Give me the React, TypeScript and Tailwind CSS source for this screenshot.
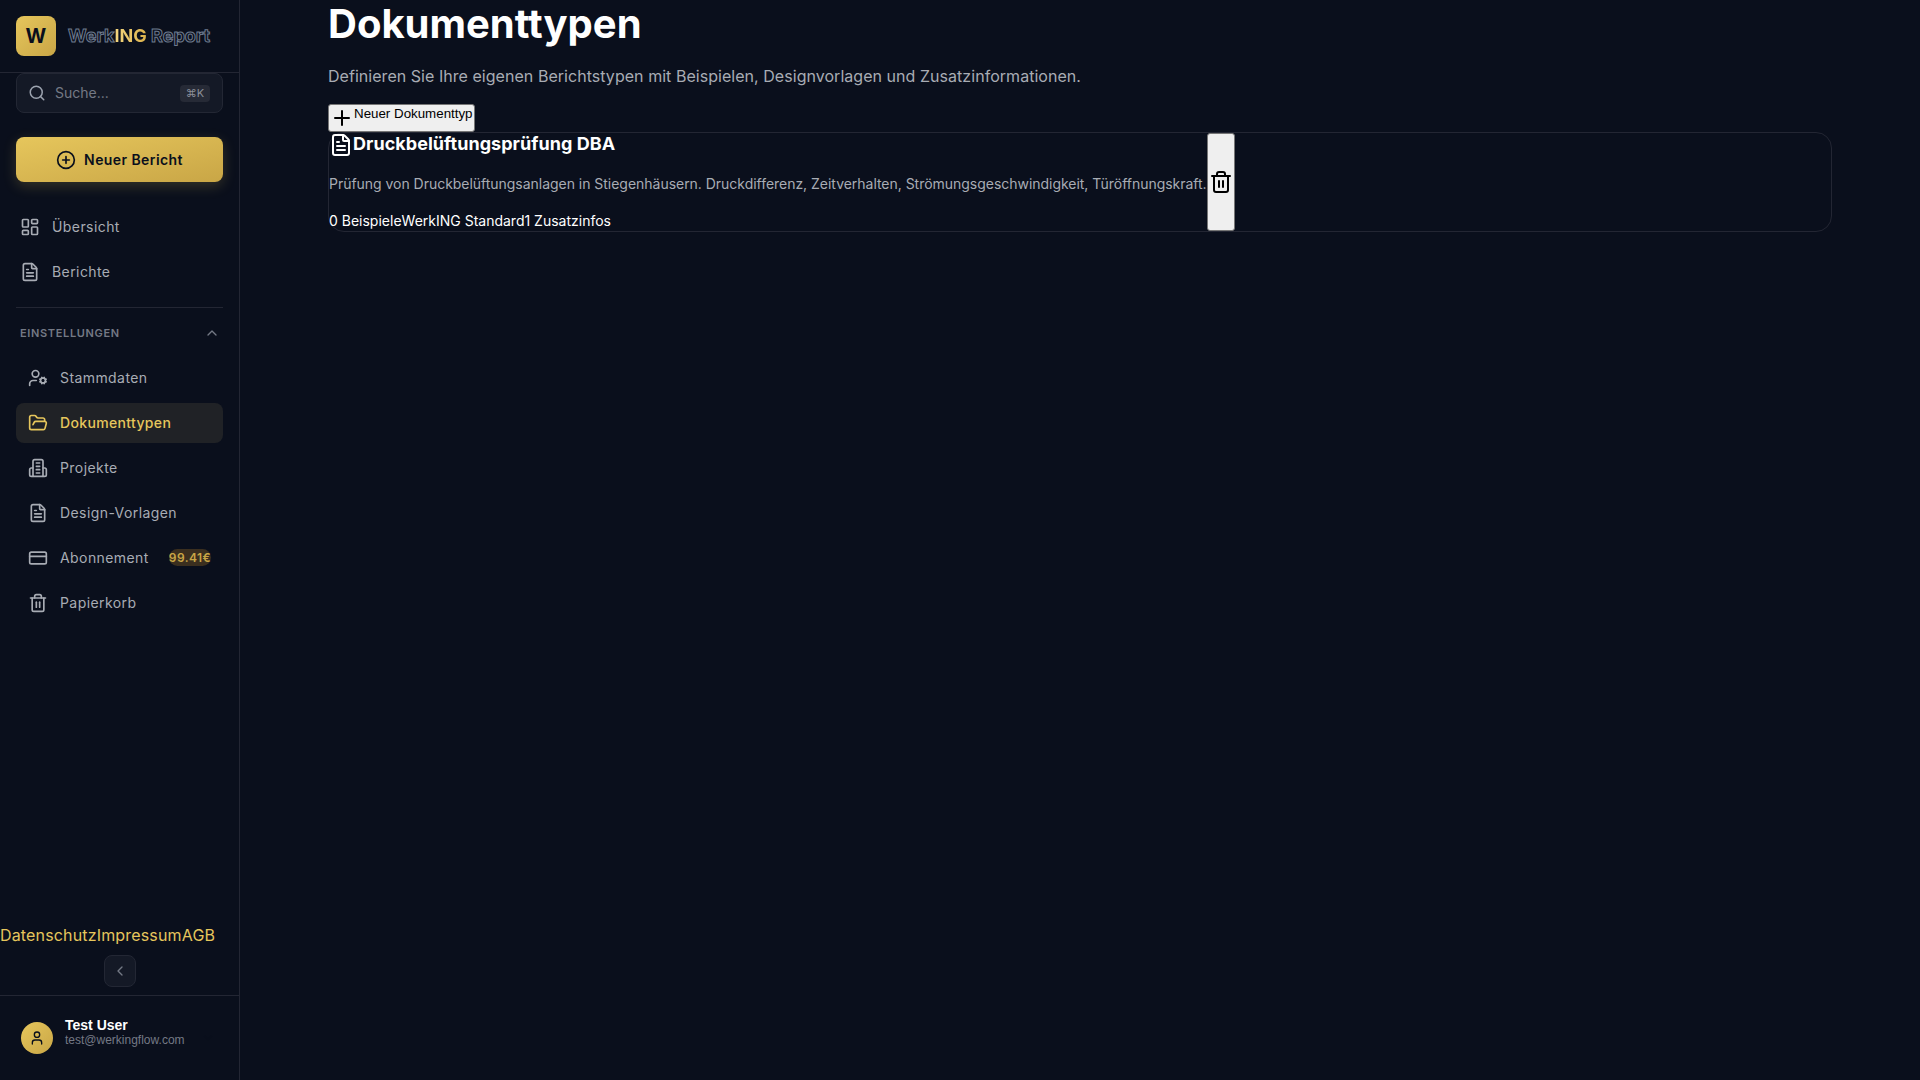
import React from 'react';
import {
  Search,
  CirclePlus,
  LayoutDashboard,
  FileText,
  ChevronUp,
  ChevronLeft,
  ChevronDown,
  UserCog,
  FolderOpen,
  CreditCard,
  Trash2,
  Plus,
  User,
} from 'lucide-react';

const gold = 'bg-gradient-to-br from-[#e6c65c] to-[#c9a646]';

// older lucide building, the wings sit lower than in the current package
const BuildingIcon: React.FC<{ size?: number; className?: string }> = ({ size = 20, className }) => (
  <svg width={size} height={size} viewBox="0 0 24 24" fill="none" stroke="currentColor" strokeWidth="2" strokeLinecap="round" strokeLinejoin="round" className={className}>
    <path d="M6 22V4a2 2 0 0 1 2-2h8a2 2 0 0 1 2 2v18Z" />
    <path d="M6 12H4a2 2 0 0 0-2 2v6a2 2 0 0 0 2 2h2" />
    <path d="M18 12h2a2 2 0 0 1 2 2v6a2 2 0 0 1-2 2h-2" />
    <path d="M10 6h4" />
    <path d="M10 10h4" />
    <path d="M10 14h4" />
    <path d="M10 18h4" />
  </svg>
);

const settingsItems = [
  { label: 'Stammdaten', icon: UserCog },
  { label: 'Dokumenttypen', icon: FolderOpen, active: true },
  { label: 'Projekte', icon: BuildingIcon },
  { label: 'Design-Vorlagen', icon: FileText },
  { label: 'Abonnement', icon: CreditCard, badge: '99.41€' },
  { label: 'Papierkorb', icon: Trash2 },
];

const App: React.FC = () => {
  return (
    <div className="flex h-screen overflow-hidden bg-[#0a0f1c] font-['Inter',sans-serif]">
      {/* Sidebar */}
      <aside className="flex w-[240px] shrink-0 flex-col border-r border-[#232633] bg-[#0a0f1c]">
        <div className="flex h-[73px] items-center gap-3 border-b border-[#232633] px-4">
          <div className={`flex h-10 w-10 items-center justify-center rounded-lg text-xl font-bold text-[#0a0f1c] ${gold}`}>W</div>
          <span className="text-lg font-bold text-transparent [-webkit-text-stroke:1px_#6d7a8e]">
            Werk<span className="bg-gradient-to-r from-[#f5d77f] to-[#d9b04a] bg-clip-text [-webkit-text-stroke-width:0]">ING</span> Report
          </span>
        </div>

        <div className="px-4">
          <div className="flex h-10 items-center rounded-lg border border-[#232734] bg-[#141926] pl-[11px] pr-3 text-sm text-[#747985]">
            <Search size={18} className="mr-[9px] text-[#9ca3af]" />
            <span>Suche...</span>
            <span className="ml-auto h-[17px] w-[30px] rounded bg-[#262a36] text-center text-[11px] leading-[17px] text-[#8b8f99]">⌘K</span>
          </div>

          <button className={`mt-6 flex h-[45px] w-full items-center justify-center gap-2 rounded-lg text-sm font-semibold tracking-[0.03em] text-[#0a0f1c] shadow-[0_4px_14px_rgba(230,198,92,0.2)] ${gold}`}>
            <CirclePlus size={20} />
            Neuer Bericht
          </button>
        </div>

        <nav className="mt-[25px] flex flex-col gap-[5px] px-4">
          <div className="flex h-10 items-center gap-3 rounded-lg px-1 text-sm tracking-[0.03em] text-[#a8acb4]">
            <LayoutDashboard size={20} />
            Übersicht
          </div>
          <div className="flex h-10 items-center gap-3 rounded-lg px-1 text-sm tracking-[0.03em] text-[#a8acb4]">
            <FileText size={20} />
            Berichte
          </div>
        </nav>

        <div className="mx-4 mt-[15px] border-t border-[#232633]" />

        <div className="flex items-center justify-between pl-5 pr-[19px] pt-[17px]">
          <span className="text-[11px] font-semibold tracking-[0.06em] text-[#747985]">EINSTELLUNGEN</span>
          <ChevronUp size={16} className="text-[#747985]" />
        </div>

        <nav className="mt-4 flex flex-col gap-[5px] px-4">
          {settingsItems.map(item => {
            const Icon = item.icon;
            return (
              <div
                key={item.label}
                className={`flex h-10 items-center gap-3 rounded-lg pl-3 pr-3 text-sm ${item.active ? 'bg-[#202226] font-medium tracking-[0.025em] text-[#e6c65c]' : 'tracking-[0.03em] text-[#a8acb4]'}`}
              >
                <Icon size={20} className="shrink-0" />
                <span>{item.label}</span>
                {item.badge && (
                  <span className="ml-auto rounded-full bg-[#3b2f1f] py-[1px] text-[12px] font-semibold leading-[15px] text-[#c9a646]">{item.badge}</span>
                )}
              </div>
            );
          })}
        </nav>

        <div className="mt-auto flex text-base tracking-[0.01em] text-[#e6c65c]">
          <a>Datenschutz</a>
          <a>Impressum</a>
          <a>AGB</a>
        </div>

        <div className="mt-[8px] flex justify-center pb-[8px]">
          <button className="flex h-8 w-8 items-center justify-center rounded-lg border border-[#232734] bg-[#141926] text-[#747985]">
            <ChevronLeft size={16} />
          </button>
        </div>

        <div className="flex h-[85px] items-center border-t border-[#232633] pl-[21px] pr-[24px]">
          <div className={`flex h-8 w-8 items-center justify-center rounded-full text-[#0a0f1c] ${gold}`}>
            <User size={16} />
          </div>
          <div className="ml-3 pb-3 font-['Liberation_Sans',sans-serif]">
            <div className="text-sm font-bold leading-[15px] text-white">Test User</div>
            <div className="text-xs leading-[14px] text-[#747985]">test@werkingflow.com</div>
          </div>
          <ChevronDown size={14} className="ml-auto text-[#0a0f1c]" />
        </div>
      </aside>

      {/* Main */}
      <main className="flex-1 px-[88px]">
        <h1 className="text-[40px] font-bold leading-[48px] text-white">Dokumenttypen</h1>
        <p className="mt-4 text-base tracking-[0.04px] text-[#a8acb4]">
          Definieren Sie Ihre eigenen Berichtstypen mit Beispielen, Designvorlagen und Zusatzinformationen.
        </p>

        <button className="mt-4 flex w-[147px] items-start rounded-[3px] border border-[#767676] bg-[#efefef] p-[1px] font-['Liberation_Sans',sans-serif] text-[13.33px] leading-[15px] text-black">
          <Plus size={24} className="shrink-0" />
          <span className="whitespace-nowrap">Neuer Dokumenttyp</span>
        </button>

        <div className="flex h-[100px] w-full rounded-2xl border border-[#232633]">
          <div className="flex flex-col">
            <div className="flex items-center text-lg font-bold leading-[20px] tracking-[0.04px] text-white">
              <FileText size={24} className="shrink-0" />
              <span className="mb-[2px]">Druckbelüftungsprüfung DBA</span>
            </div>
            <p className="mt-[17px] text-sm tracking-[-0.028px] text-[#a8acb4]">
              Prüfung von Druckbelüftungsanlagen in Stiegenhäusern. Druckdifferenz, Zeitverhalten, Strömungsgeschwindigkeit, Türöffnungskraft.
            </p>
            <div className="mt-[17px] flex text-sm text-white">
              <span>0 Beispiele</span>
              <span>WerkING Standard</span>
              <span>1 Zusatzinfos</span>
            </div>
          </div>
          <button className="flex w-[28px] shrink-0 items-center justify-center rounded-[3px] border border-[#767676] bg-[#efefef] text-black">
            <Trash2 size={24} className="mb-[1px]" />
          </button>
        </div>
      </main>
    </div>
  );
};

export default App;
